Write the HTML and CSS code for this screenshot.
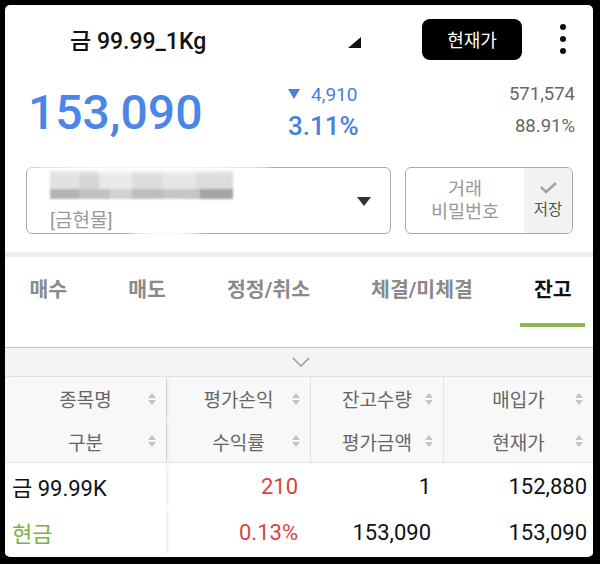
FILE: index.html
```html
<!DOCTYPE html>
<html lang="ko">
<head>
    <meta charset="UTF-8">
    <meta name="viewport" content="width=device-width, initial-scale=1.0">
    <title>잔고</title>
    <link rel="stylesheet" href="styles.css">
</head>
<body>
    <div class="screen">
        <header class="top-bar">
            <div class="spinner">
                <span class="title">금 99.99_1Kg</span>
                <svg class="corner" width="13" height="11" viewBox="0 0 13 11"><path d="M0 11 L13 11 L13 0 Z" fill="#111"/></svg>
            </div>
            <button class="price-btn">현재가</button>
            <div class="more"><i></i><i></i><i></i></div>
        </header>

        <section class="quote">
            <div class="last">153,090</div>
            <div class="change">
                <div class="diff">
                    <svg width="12" height="10" viewBox="0 0 12 10"><path d="M0 0 L12 0 L6 10 Z" fill="#4a80dc"/></svg>
                    <span>4,910</span>
                </div>
                <div class="rate">3.11%</div>
            </div>
            <div class="volume">
                <div>571,574</div>
                <div>88.91%</div>
            </div>
        </section>

        <section class="account-row">
            <div class="account">
                <div class="mosaic">
                    <div class="mosaic-top"></div>
                    <div class="mosaic-bottom"></div>
                </div>
                <div class="account-type">[금현물]</div>
                <svg class="drop" width="14" height="9" viewBox="0 0 14 9"><path d="M0 0 L14 0 L7 9 Z" fill="#333"/></svg>
                <div class="smudge smudge-top"></div>
                <div class="smudge smudge-bottom"></div>
            </div>
            <div class="password">
                <div class="pw-label">거래<br>비밀번호</div>
                <div class="pw-save">
                    <svg width="20" height="12" viewBox="0 0 20 12"><path d="M3 5 L8 10 L18 1" fill="none" stroke="#a5a5a5" stroke-width="2.5"/></svg>
                    <span>저장</span>
                </div>
            </div>
        </section>

        <div class="divider"></div>

        <nav class="tabs">
            <div class="tab">매수</div>
            <div class="tab">매도</div>
            <div class="tab">정정/취소</div>
            <div class="tab">체결/미체결</div>
            <div class="tab active">잔고</div>
        </nav>

        <div class="fold">
            <svg width="18" height="10" viewBox="0 0 18 10"><path d="M1 1 L9 9 L17 1" fill="none" stroke="#9a9a9a" stroke-width="1.5"/></svg>
        </div>

        <div class="balance">
            <div class="head fixed"><span>종목명</span><i class="sort"></i></div>
            <div class="head"><span>평가손익</span><i class="sort"></i></div>
            <div class="head"><span>잔고수량</span><i class="sort"></i></div>
            <div class="head"><span>매입가</span><i class="sort"></i></div>

            <div class="head fixed last-head"><span>구분</span><i class="sort"></i></div>
            <div class="head last-head"><span>수익률</span><i class="sort"></i></div>
            <div class="head last-head"><span>평가금액</span><i class="sort"></i></div>
            <div class="head last-head"><span>현재가</span><i class="sort"></i></div>

            <div class="cell fixed name">금 99.99K</div>
            <div class="cell red">210</div>
            <div class="cell">1</div>
            <div class="cell end">152,880</div>

            <div class="cell fixed green">현금</div>
            <div class="cell red">0.13%</div>
            <div class="cell">153,090</div>
            <div class="cell end">153,090</div>
        </div>
    </div>
</body>
</html>
```

FILE: styles.css
```css
* {
    box-sizing: border-box;
    margin: 0;
    padding: 0;
}

body {
    background-color: #000;
    padding: 5px 0 0 5px;
    font-family: Roboto, "Noto Sans CJK KR", sans-serif;
    color: #111;
}

.screen {
    width: 588px;
    height: 552px;
    background-color: #fff;
    border-radius: 5px;
    overflow: hidden;
    display: flex;
    flex-direction: column;
}

/* top bar */

.top-bar {
    display: flex;
    align-items: center;
    height: 68px;
    padding-left: 65px;
}

.spinner {
    display: flex;
    align-items: center;
    justify-content: space-between;
    width: 291px;
}

.title {
    font-size: 23px;
    font-weight: 500;
}

.corner {
    margin-top: 6px;
}

.price-btn {
    margin-left: 61px;
    width: 100px;
    height: 41px;
    background-color: #000;
    color: #fff;
    border: none;
    border-radius: 8px;
    font-family: inherit;
    font-size: 18px;
}

.more {
    display: flex;
    flex-direction: column;
    gap: 6px;
    margin-left: 38px;
}

.more i {
    width: 6px;
    height: 6px;
    border-radius: 50%;
    background-color: #111;
}

/* quote */

.quote {
    display: flex;
    align-items: flex-start;
    height: 94px;
    padding: 0 18px 0 23px;
}

.last {
    width: 260px;
    margin-top: 12px;
    font-size: 48px;
    font-weight: 500;
    line-height: 56px;
    color: #4a86e8;
}

.change {
    margin-top: 5px;
    color: #4a80dc;
}

.diff {
    display: flex;
    align-items: center;
    gap: 11px;
    height: 32px;
    font-size: 19px;
}

.rate {
    height: 32px;
    line-height: 32px;
    font-size: 26px;
    font-weight: 500;
}

.volume {
    flex: 1;
    margin-top: 5px;
    text-align: right;
    font-size: 18.5px;
    line-height: 32px;
    color: #666;
}

/* account */

.account-row {
    display: flex;
    gap: 14px;
    padding: 0 20px 18px 21px;
}

.account {
    position: relative;
    width: 365px;
    height: 67px;
    border: 1px solid #aaa;
    border-radius: 6px;
    padding: 2px 0 0 23px;
}

.mosaic {
    width: 183px;
    filter: blur(1px);
}

.mosaic-top {
    height: 19px;
    background: linear-gradient(90deg, #e2e2e2 0 16%, #d6d6d6 16% 27%, #e9e9e9 27% 45%, #dddddd 45% 62%, #e6e6e6 62% 80%, #dcdcdc 80%);
}

.mosaic-bottom {
    height: 10px;
    background: linear-gradient(90deg, #b4b4b4 0 16%, #c2c2c2 16% 33%, #d2d2d2 33% 45%, #bebebe 45% 62%, #c6c6c6 62% 82%, #a4a4a4 82%);
}

.account-type {
    margin-top: 6px;
    font-size: 19px;
    color: #999;
}

.drop {
    position: absolute;
    right: 19px;
    top: 29px;
}

.smudge {
    position: absolute;
    background-color: #fff;
    border-radius: 50%;
    filter: blur(3px);
}

.smudge-top {
    left: -4px;
    top: -6px;
    width: 250px;
    height: 10px;
}

.smudge-bottom {
    left: 92px;
    top: 34px;
    width: 92px;
    height: 36px;
}

.password {
    display: flex;
    width: 168px;
    height: 67px;
    border: 1px solid #aaa;
    border-radius: 6px;
    overflow: hidden;
}

.pw-label {
    flex: 1;
    display: flex;
    align-items: center;
    justify-content: center;
    text-align: center;
    font-size: 18.5px;
    line-height: 23px;
    color: #999;
}

.pw-save {
    width: 48px;
    display: flex;
    flex-direction: column;
    align-items: center;
    justify-content: center;
    gap: 3px;
    background-color: #f2f2f2;
    font-size: 15.5px;
    color: #555;
}

.divider {
    height: 5px;
    background-color: #ececec;
}

/* tabs */

.tabs {
    display: flex;
    height: 91px;
    margin-left: -6px;
    border-bottom: 1px solid #c6c6c6;
}

.tab {
    flex: none;
    padding: 19px 30.5px 0;
    height: 90px;
    font-size: 20.5px;
    font-weight: 700;
    line-height: 28px;
    color: #8a8a8a;
}

.tab.active {
    color: #111;
    background: linear-gradient(#8ab84c, #8ab84c) no-repeat center 66px / 65px 4px;
}

.fold {
    display: flex;
    align-items: center;
    justify-content: center;
    height: 29px;
    padding-left: 4px;
    background-color: #f4f4f4;
    border-bottom: 1px solid #e2e2e2;
}

/* balance table */

.balance {
    display: grid;
    grid-template-columns: 161px 144px 133px 150px;
    grid-auto-rows: 43px 43px 46px 46px;
}

.head {
    display: grid;
    grid-template-columns: 1fr auto 1fr;
    align-items: center;
    background-color: #f8f8f8;
    border-left: 1px solid #e2e2e2;
    font-size: 19px;
    color: #666;
}

.head span {
    grid-column: 2;
}

.head.last-head {
    border-bottom: 1px solid #e2e2e2;
}

.head.fixed {
    border-left: none;
}

.sort {
    justify-self: end;
    margin-right: 10px;
    display: flex;
    flex-direction: column;
    gap: 2px;
}

.sort::before,
.sort::after {
    content: "";
    border-left: 4px solid transparent;
    border-right: 4px solid transparent;
}

.sort::before {
    border-bottom: 5px solid #c4c4c4;
}

.sort::after {
    border-top: 5px solid #c4c4c4;
}

.fixed {
    position: relative;
    z-index: 1;
    box-shadow: 4px 0 3px -2px rgba(0, 0, 0, 0.08);
}

.cell {
    display: flex;
    align-items: center;
    justify-content: flex-end;
    padding-right: 12px;
    font-size: 22px;
    background-color: #fff;
}

.cell.fixed {
    justify-content: flex-start;
    padding: 0 0 0 7px;
}

.cell.end {
    padding-right: 6px;
}

.red {
    color: #d4473c;
}

.green {
    color: #7cb342;
}
```
